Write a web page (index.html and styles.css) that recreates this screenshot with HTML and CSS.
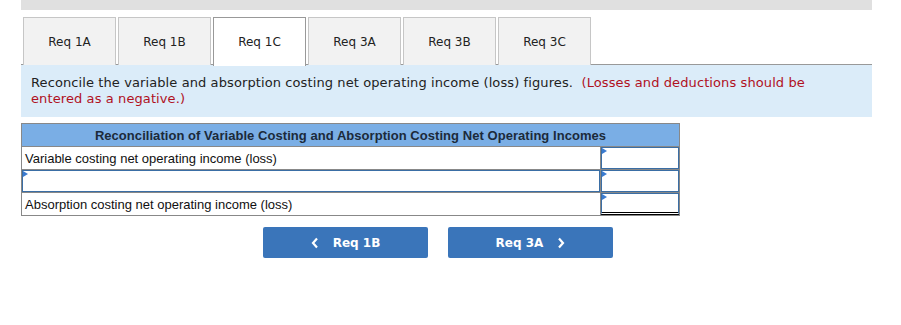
FILE: index.html
```html
<!DOCTYPE html>
<html lang="en">
<head>
    <meta charset="UTF-8">
    <title>Req 1C</title>
    <link rel="stylesheet" href="styles.css">
</head>
<body>
    <div class="container">
        <div class="topbar"></div>
        <div class="tabs">
            <div class="tab">Req 1A</div>
            <div class="tab">Req 1B</div>
            <div class="tab active">Req 1C</div>
            <div class="tab">Req 3A</div>
            <div class="tab">Req 3B</div>
            <div class="tab">Req 3C</div>
        </div>
        <div class="info">
            <p>Reconcile the variable and absorption costing net operating income (loss) figures.&nbsp; <span class="red">(Losses and deductions should be entered as a negative.)</span></p>
        </div>
        <table class="recon">
            <tr>
                <th colspan="2">Reconciliation of Variable Costing and Absorption Costing Net Operating Incomes</th>
            </tr>
            <tr>
                <td class="label">Variable costing net operating income (loss)</td>
                <td class="amount"><div class="box"></div></td>
            </tr>
            <tr>
                <td class="label"><div class="box wide"></div></td>
                <td class="amount"><div class="box"></div></td>
            </tr>
            <tr>
                <td class="label">Absorption costing net operating income (loss)</td>
                <td class="amount total"><div class="box"></div></td>
            </tr>
        </table>
        <div class="nav">
            <button class="navbtn">
                <svg width="8" height="12" viewBox="0 0 8 12"><path d="M6 1.5 L2 6 L6 10.5" fill="none" stroke="white" stroke-width="2.2"/></svg>
                <span>Req 1B</span>
            </button>
            <button class="navbtn">
                <span>Req 3A</span>
                <svg width="8" height="12" viewBox="0 0 8 12"><path d="M2 1.5 L6 6 L2 10.5" fill="none" stroke="white" stroke-width="2.2"/></svg>
            </button>
        </div>
    </div>
</body>
</html>
```

FILE: styles.css
```css
body {
    margin: 0;
    padding: 0;
    background-color: white;
    font-family: "DejaVu Sans", Verdana, sans-serif;
    color: #222;
}

.container {
    margin-left: 21px;
    width: 851px;
}

.topbar {
    height: 10px;
    background-color: #e0e0e0;
}

.tabs {
    display: flex;
    gap: 2px;
    margin-top: 7px;
    padding-left: 2px;
    border-bottom: 1px solid #999;
    height: 47px;
}

.tab {
    width: 91px;
    height: 45px;
    border: 1px solid #c6c6c6;
    border-bottom: none;
    background-color: #f2f2f2;
    font-size: 12px;
    display: flex;
    align-items: center;
    justify-content: center;
    padding-bottom: 1px;
    padding-top: 1px;
}

.tab.active {
    background-color: white;
    border-color: #999;
    height: 46px;
    margin-bottom: -1px;
}

.info {
    background-color: #dbecf9;
    padding: 10px 55px 10px 10px;
}

.info p {
    margin: 0;
    font-size: 13px;
    line-height: 16px;
    letter-spacing: 0.1px;
    color: #222;
}

.red {
    color: #b0111e;
}

.recon {
    margin-top: 6px;
    border-collapse: collapse;
    width: 659px;
    font-family: "Liberation Sans", Arial, sans-serif;
    font-size: 13px;
}

.recon th {
    background-color: #7aaee5;
    border: 1px solid #888;
    height: 22px;
    padding: 0;
    font-size: 13px;
    letter-spacing: 0.05px;
    color: #1c2a3a;
    text-align: center;
}

.recon td {
    border: 1px solid #888;
    height: 22px;
    padding: 0;
}

.recon td.label {
    padding-left: 3px;
    color: #111;
}

.recon tr:nth-child(3) td.label {
    padding-left: 0;
}

.recon td.amount {
    width: 78px;
    padding: 0;
}

.box {
    position: relative;
    height: 20px;
    border: 1px solid #3a6ea5;
    background-color: white;
}

.box::before {
    content: "";
    position: absolute;
    left: 0;
    top: 0;
    border-left: 5px solid #3a7bd0;
    border-top: 3px solid transparent;
    border-bottom: 3px solid transparent;
}

.total .box {
    border-bottom: 3px double #000;
    height: 18px;
}

.nav {
    display: flex;
    gap: 20px;
    margin-top: 11px;
    margin-left: 242px;
}

.navbtn {
    width: 165px;
    height: 31px;
    background-color: #3a75ba;
    border: none;
    border-radius: 2px;
    color: white;
    font-family: "DejaVu Sans", Verdana, sans-serif;
    font-weight: bold;
    font-size: 12px;
    display: flex;
    align-items: center;
    justify-content: center;
    gap: 14px;
    padding: 0;
}
```
